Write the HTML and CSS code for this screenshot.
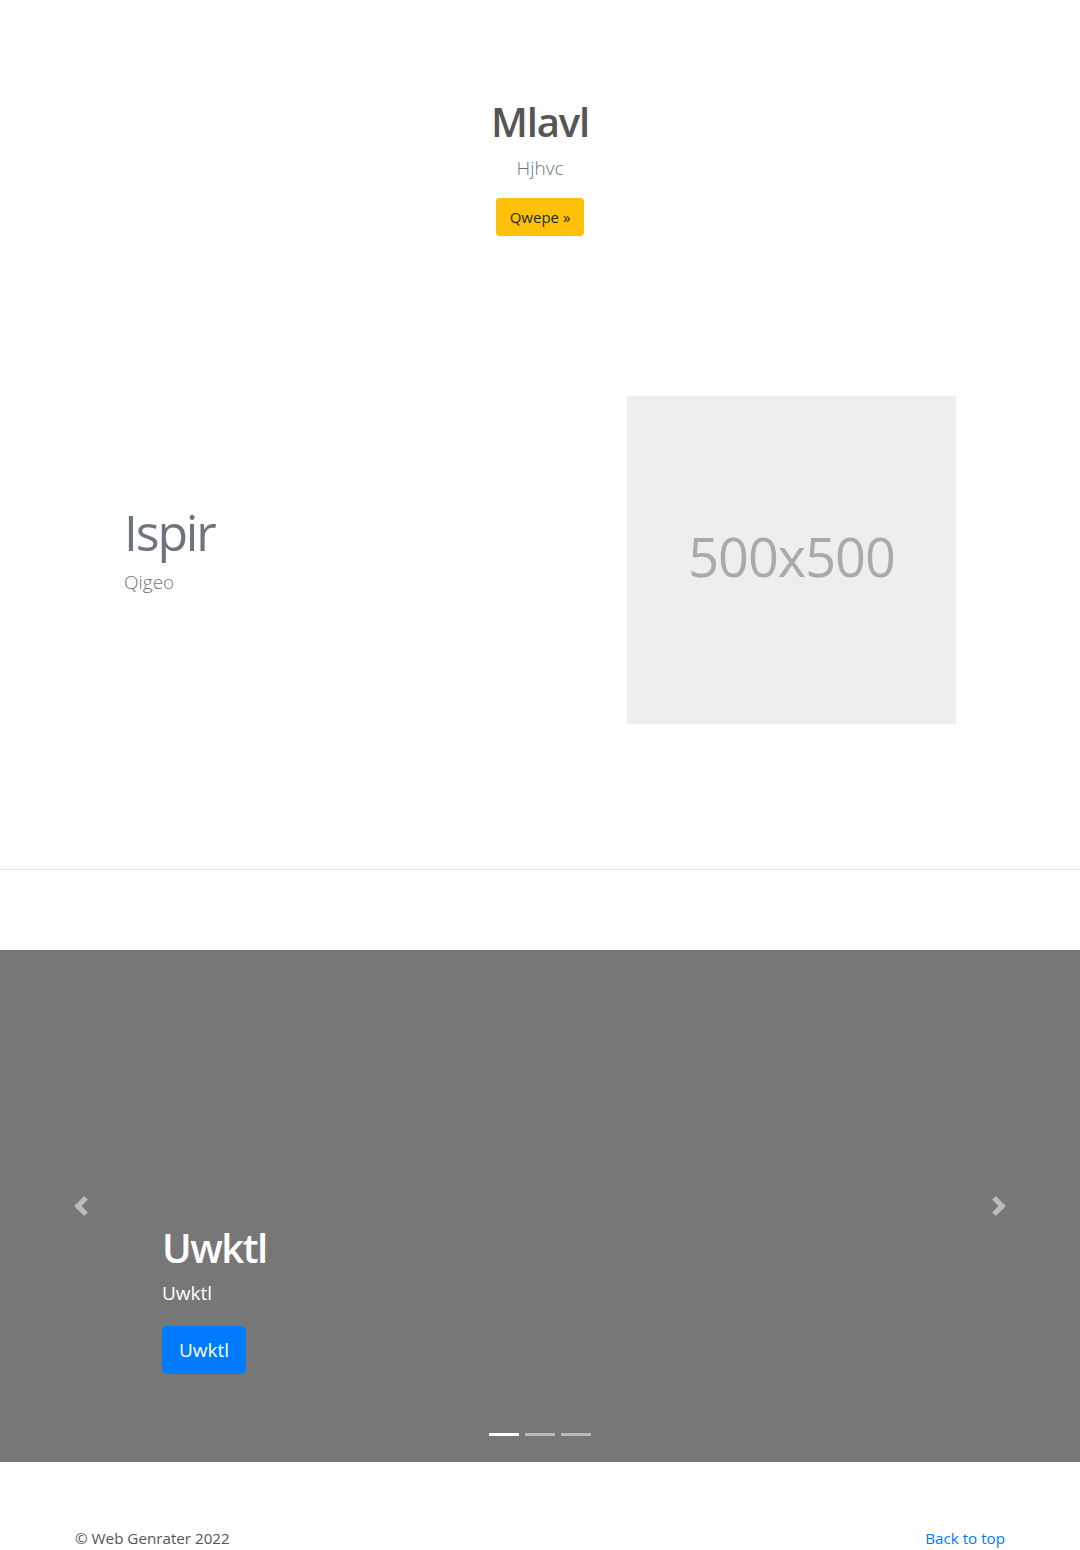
FILE: index.html
```html
<!DOCTYPE html>
<html lang="en">
<head>
<meta charset="utf-8">
<title>Mlavl</title>
<link rel="stylesheet" href="styles.css">
</head>
<body>
<main>
  <section class="hero">
    <h1 class="hero-title">Mlavl</h1>
    <p class="lead hero-sub">Hjhvc</p>
    <a class="btn btn-warning" href="#">Qwepe &raquo;</a>
  </section>

  <section class="featurette">
    <div class="feat-text">
      <h2 class="feat-heading">Ispir</h2>
      <p class="lead feat-lead">Qigeo</p>
    </div>
    <div class="feat-img">500x500</div>
  </section>

  <hr class="divider">

  <section class="carousel">
    <ol class="indicators">
      <li class="active"></li>
      <li></li>
      <li></li>
    </ol>
    <a class="control control-prev" href="#" aria-label="Previous">
      <svg viewBox="0 0 8 8" width="20" height="20"><path fill="#fff" d="M5.25 0l-4 4 4 4 1.5-1.5L4.25 4l2.5-2.5L5.25 0z"/></svg>
    </a>
    <a class="control control-next" href="#" aria-label="Next">
      <svg viewBox="0 0 8 8" width="20" height="20"><path fill="#fff" d="M2.75 0l-1.5 1.5L3.75 4l-2.5 2.5L2.75 8l4-4-4-4z"/></svg>
    </a>
    <div class="caption">
      <h1 class="caption-title">Uwktl</h1>
      <p class="caption-text">Uwktl</p>
      <a class="btn btn-primary btn-lg" href="#">Uwktl</a>
    </div>
  </section>

  <footer class="footer">
    <p class="copy">&copy; Web Genrater 2022</p>
    <a class="top-link" href="#">Back to top</a>
  </footer>
</main>
</body>
</html>
```

FILE: styles.css
```css
* { box-sizing: border-box; }

html, body {
  margin: 0;
  padding: 0;
}

body {
  font-family: "Open Sans", "Noto Sans", "Liberation Sans", sans-serif;
  font-size: 16px;
  line-height: 1.5;
  color: #212529;
  background: #fff;
}

a { text-decoration: none; }

.btn {
  display: inline-block;
  font-size: 15px;
  line-height: 24px;
  padding: 7px 14px;
  border-radius: 4px;
}

.btn-warning {
  background: #ffc107;
  color: #212529;
}

.btn-primary {
  background: #007bff;
  color: #fff;
}

.btn-lg {
  font-size: 19px;
  line-height: 30px;
  padding: 9px 17px;
  border-radius: 5px;
}

.lead {
  font-size: 19px;
  font-weight: 300;
  line-height: 30px;
  margin: 0;
}

/* Hero */
.hero {
  padding-top: 98px;
  text-align: center;
}

.hero-title {
  margin: 0 0 7px;
  font-size: 40px;
  line-height: 48px;
  font-weight: 600;
  color: #555;
  letter-spacing: -1.1px;
}

.hero-sub {
  color: #6c757d;
  margin-bottom: 15px;
}

/* Featurette */
.featurette {
  display: flex;
  align-items: center;
  margin-top: 160px;
  padding: 0 124px 0 124px;
}

.feat-text {
  flex: 1;
  padding-bottom: 22px;
}

.feat-heading {
  margin: 0 0 5px;
  font-size: 50px;
  font-weight: 400;
  line-height: 60px;
  letter-spacing: -2.2px;
  color: #6c757d;
}

.feat-lead {
  color: #6c757d;
}

.feat-img {
  width: 329px;
  height: 328px;
  background: #eee;
  color: #aaa;
  font-size: 54px;
  display: flex;
  align-items: center;
  justify-content: center;
  letter-spacing: -1px;
  padding-bottom: 8px;
}

/* Divider */
.divider {
  margin: 145px 0 0;
  border: 0;
  border-top: 1px solid #e5e5e5;
  height: 0;
}

/* Carousel */
.carousel {
  position: relative;
  margin-top: 80px;
  height: 512px;
  background: #777;
  display: flex;
  align-items: flex-end;
  padding: 0 15% 88px;
}

.caption {
  color: #fff;
}

.caption-title {
  margin: 0 0 7px;
  font-size: 40px;
  line-height: 48px;
  font-weight: 600;
  letter-spacing: -1.5px;
}

.caption-text {
  margin: 0 0 19px;
  font-size: 19px;
  line-height: 28px;
}

.control {
  position: absolute;
  top: 0;
  bottom: 0;
  width: 15%;
  display: flex;
  align-items: center;
  justify-content: center;
  opacity: 0.5;
}

.control-prev { left: 0; }
.control-next { right: 0; }

.control svg { display: block; }

.indicators {
  position: absolute;
  left: 0;
  right: 0;
  bottom: 16px;
  margin: 0;
  padding: 0;
  list-style: none;
  display: flex;
  justify-content: center;
  gap: 6px;
}

.indicators li {
  width: 30px;
  height: 23px;
  border-top: 10px solid transparent;
  border-bottom: 10px solid transparent;
  background: #fff;
  background-clip: padding-box;
  opacity: 0.5;
}

.indicators li.active { opacity: 1; }

/* Footer */
.footer {
  display: flex;
  justify-content: space-between;
  align-items: center;
  padding: 64px 75px 48px;
}

.copy {
  margin: 0;
  font-size: 15.2px;
  line-height: 24px;
  color: #555;
}

.top-link {
  font-size: 15.2px;
  line-height: 24px;
  color: #007bff;
}
```
